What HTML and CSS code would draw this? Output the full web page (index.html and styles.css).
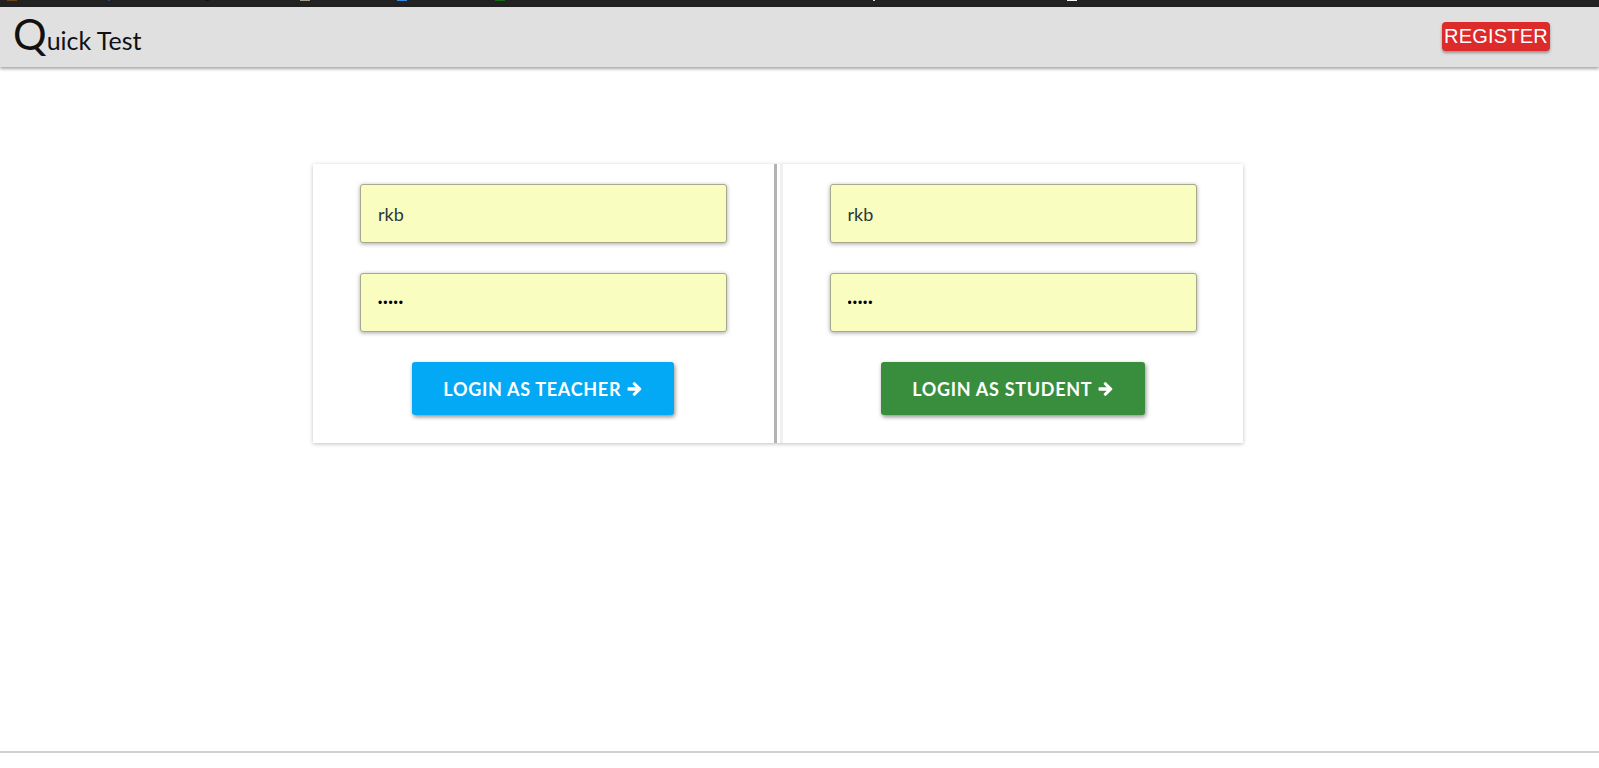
FILE: index.html
```html
<!DOCTYPE html>
<html>
<head>
<meta charset="utf-8">
<title>Quick Test</title>
<link rel="stylesheet" href="styles.css">
</head>
<body>
<div class="topstrip">
  <span class="tab t1"></span><span class="tab t2"></span><span class="tab t3"></span><span class="tab t4"></span><span class="tab t5"></span><span class="tab t6"></span><span class="tab t7"></span><span class="tab t8"></span>
</div>
<header class="navbar">
  <div class="brand"><span class="big">Q</span>uick Test</div>
  <button class="register">REGISTER</button>
</header>
<main class="main">
  <div class="card">
    <section class="panel panel-left">
      <input class="field" type="text" value="rkb">
      <input class="field" type="password" value="abcde">
      <button class="btn btn-teacher">LOGIN AS TEACHER <svg class="arrow" viewBox="0 0 16 16"><path d="M1.5 6.3h7.2L6 3.6a1.2 1.2 0 0 1 0-1.7l.5-.5a1.2 1.2 0 0 1 1.7 0l5.9 5.9a1 1 0 0 1 0 1.4l-5.9 5.9a1.2 1.2 0 0 1-1.7 0l-.5-.5a1.2 1.2 0 0 1 0-1.7l2.7-2.7H1.5A1 1 0 0 1 .5 8.9V7.3a1 1 0 0 1 1-1z"/></svg></button>
    </section>
    <section class="panel panel-right">
      <input class="field" type="text" value="rkb">
      <input class="field" type="password" value="abcde">
      <button class="btn btn-student">LOGIN AS STUDENT <svg class="arrow" viewBox="0 0 16 16"><path d="M1.5 6.3h7.2L6 3.6a1.2 1.2 0 0 1 0-1.7l.5-.5a1.2 1.2 0 0 1 1.7 0l5.9 5.9a1 1 0 0 1 0 1.4l-5.9 5.9a1.2 1.2 0 0 1-1.7 0l-.5-.5a1.2 1.2 0 0 1 0-1.7l2.7-2.7H1.5A1 1 0 0 1 .5 8.9V7.3a1 1 0 0 1 1-1z"/></svg></button>
    </section>
  </div>
</main>
<div class="bottomline"></div>
</body>
</html>
```
FILE: styles.css
```css
html, body {
  margin: 0;
  padding: 0;
  background: #ffffff;
  height: 768px;
  overflow: hidden;
}
body {
  font-family: "Lato", "Noto Sans", sans-serif;
  display: flex;
  flex-direction: column;
}
.topstrip {
  height: 7px;
  background: #222222;
  display: flex;
  position: relative;
  flex: none;
}
.tab {
  height: 1px;
  width: 10px;
  position: absolute;
  top: 0;
}
.t1 { left: 7px; background: #6b4513; width: 10px; }
.t2 { left: 108px; background: #2a4b7a; width: 2px; }
.t3 { left: 205px; background: #111; width: 4px; }
.t4 { left: 300px; background: #a89a8a; width: 10px; }
.t5 { left: 397px; background: #2f8be0; width: 10px; }
.t6 { left: 495px; background: #126b12; width: 10px; }
.t7 { left: 873px; background: #d8d8d8; width: 2px; }
.t8 { left: 1067px; background: #f2f2f2; width: 10px; }

.navbar {
  flex: none;
  height: 60px;
  background: #e0e0e0;
  box-shadow: 0 2px 3px rgba(0, 0, 0, 0.35);
  display: flex;
  align-items: center;
  justify-content: space-between;
  padding: 0 49px 0 13px;
  position: relative;
  z-index: 2;
}
.brand {
  font-family: "Lato", "Noto Sans", sans-serif;
  font-size: 25px;
  color: #111;
  display: flex;
  align-items: baseline;
  margin-top: -6px;
}
.big {
  font-size: 42px;
  line-height: 1;
}
.register {
  font-family: "Liberation Sans", Arial, sans-serif;
  font-size: 20px;
  color: #ffffff;
  background: #dd2a2a;
  border: none;
  border-radius: 4px;
  height: 29px;
  width: 108px;
  padding: 0;
  margin-top: -1px;
  box-shadow: 0 2px 3px rgba(0, 0, 0, 0.35);
  letter-spacing: 0.2px;
}

.main {
  flex: 1;
  padding: 97px 0 0 313px;
}
.card {
  display: flex;
  width: 930px;
  box-shadow: 0 1px 4px rgba(0, 0, 0, 0.25);
  background: #ffffff;
}
.panel {
  width: 368px;
  padding: 20px 47px 28px 47px;
  display: flex;
  flex-direction: column;
  align-items: center;
  gap: 30px;
}
.panel-left {
  border-right: 3px solid #b3b3b3;
  padding-right: 47px;
}
.panel-right {
  margin-left: 3px;
  border-left: 3px solid #f0f0f0;
  width: 369px;
  padding-left: 47px;
  padding-right: 46px;
}
.field {
  box-sizing: border-box;
  width: 100%;
  height: 59px;
  margin: 0;
  background: #f9fdc0;
  border: 1px solid #a8a88a;
  border-radius: 3px;
  box-shadow: 0 1px 4px rgba(0, 0, 0, 0.35);
  padding: 0 17px;
  font-family: "Lato", "Noto Sans", sans-serif;
  font-size: 18px;
  color: #2a3a3a;
  outline: none;
}
.field[type="password"] {
  font-family: "Liberation Sans", Arial, sans-serif;
  font-size: 12px;
  color: #000;
  letter-spacing: 1px;
  padding-left: 17px;
}
.btn {
  height: 53px;
  border: none;
  border-radius: 3px;
  color: #ffffff;
  font-family: "Lato", "Noto Sans", sans-serif;
  font-size: 18px;
  font-weight: 700;
  padding: 0 31px;
  box-shadow: 1px 2px 4px rgba(0, 0, 0, 0.45);
  display: flex;
  align-items: center;
  gap: 6px;
  letter-spacing: 0.7px;
}
.btn-teacher {
  background: #03a9f4;
}
.btn-student {
  background: #388e3c;
}
.arrow {
  width: 16px;
  height: 16px;
  fill: #ffffff;
}
.bottomline {
  flex: none;
  height: 2px;
  background: #d0d0d0;
  margin-bottom: 15px;
}
```
